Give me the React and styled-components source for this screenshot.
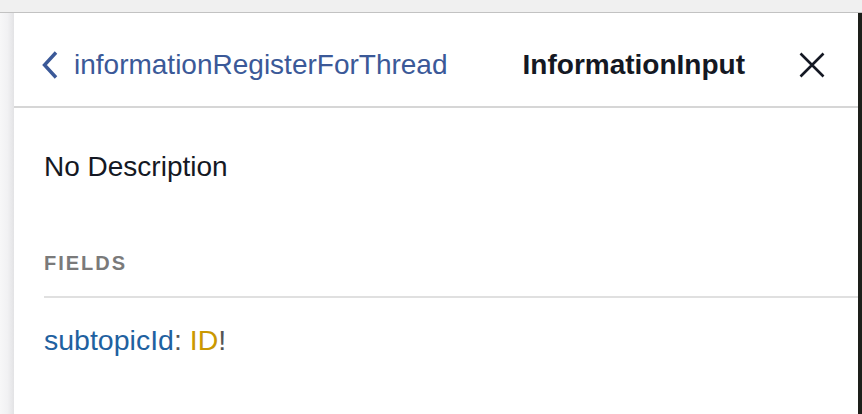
import React from 'react';
import styled, { createGlobalStyle } from 'styled-components';

const GlobalStyle = createGlobalStyle`
  html, body {
    margin: 0;
    padding: 0;
    height: 100%;
    overflow: hidden;
  }
  body {
    font-family: "Liberation Sans", Arial, sans-serif;
    background: #f0f0f0;
  }
`;

const Page = styled.div`
  display: flex;
  flex-direction: column;
  height: 100vh;
`;

const TopBar = styled.div`
  height: 12px;
  flex: none;
  background: #f0f0f0;
  border-bottom: 1px solid #c2c2c2;
`;

const Body = styled.div`
  flex: 1;
  display: flex;
  min-height: 0;
`;

const Gutter = styled.div`
  width: 14px;
  flex: none;
  background: linear-gradient(to right, #f7f7f8 0%, #f1f1f3 55%, #e3e3e5 100%);
`;

const Editor = styled.div`
  width: 4px;
  flex: none;
  background: #1d1f1a;
`;

const Panel = styled.section`
  flex: 1;
  background: #fff;
  display: flex;
  flex-direction: column;
`;

const Header = styled.header`
  display: flex;
  align-items: center;
  height: 95px;
  box-sizing: border-box;
  padding: 11px 33px 0 28px;
  border-bottom: 2px solid #d6d6d6;
`;

const BackLink = styled.a`
  display: flex;
  align-items: center;
  gap: 16px;
  color: #3b5998;
  font-size: 28px;
  line-height: 32px;
  text-decoration: none;
  cursor: pointer;
`;

const Title = styled.h1`
  margin: 0 0 0 auto;
  font-size: 28px;
  line-height: 32px;
  font-weight: bold;
  color: #141823;
`;

const CloseButton = styled.button`
  display: flex;
  margin-left: 54px;
  padding: 0;
  border: 0;
  background: none;
  cursor: pointer;
`;

const Content = styled.div`
  padding: 43px 0 0 30px;
`;

const Description = styled.p`
  margin: 0;
  font-size: 28px;
  line-height: 32px;
  color: #141823;
`;

const SectionTitle = styled.h2`
  margin: 69px 0 0;
  padding-bottom: 21px;
  border-bottom: 2px solid #e0e0e0;
  font-size: 20px;
  line-height: 23px;
  font-weight: bold;
  letter-spacing: 2px;
  color: #7a7a7a;
`;

const Field = styled.div`
  margin-top: 26px;
  font-size: 28.5px;
  line-height: 32px;
  color: #555;
`;

const Token = styled.span`
  color: ${p => p.$color};
`;

const Chevron = () => (
  <svg width="16" height="28" viewBox="0 0 16 28">
    <polyline points="14,1.5 2.5,14 14,26.5" fill="none" stroke="#3b5998" strokeWidth="3.4" />
  </svg>
);

const CloseIcon = () => (
  <svg width="26" height="26" viewBox="0 0 26 26">
    <path d="M1.5 1.5 L24.5 24.5 M24.5 1.5 L1.5 24.5" stroke="#141823" strokeWidth="2.6" />
  </svg>
);

const App = () => (
  <Page>
    <GlobalStyle />
    <TopBar />
    <Body>
      <Gutter />
      <Panel>
        <Header>
          <BackLink>
            <Chevron />
            informationRegisterForThread
          </BackLink>
          <Title>InformationInput</Title>
          <CloseButton aria-label="Close">
            <CloseIcon />
          </CloseButton>
        </Header>
        <Content>
          <Description>No Description</Description>
          <SectionTitle>FIELDS</SectionTitle>
          <Field>
            <Token $color="#1f61a0">subtopicId</Token>: <Token $color="#ca9800">ID</Token>!
          </Field>
        </Content>
      </Panel>
      <Editor />
    </Body>
  </Page>
);

export default App;
